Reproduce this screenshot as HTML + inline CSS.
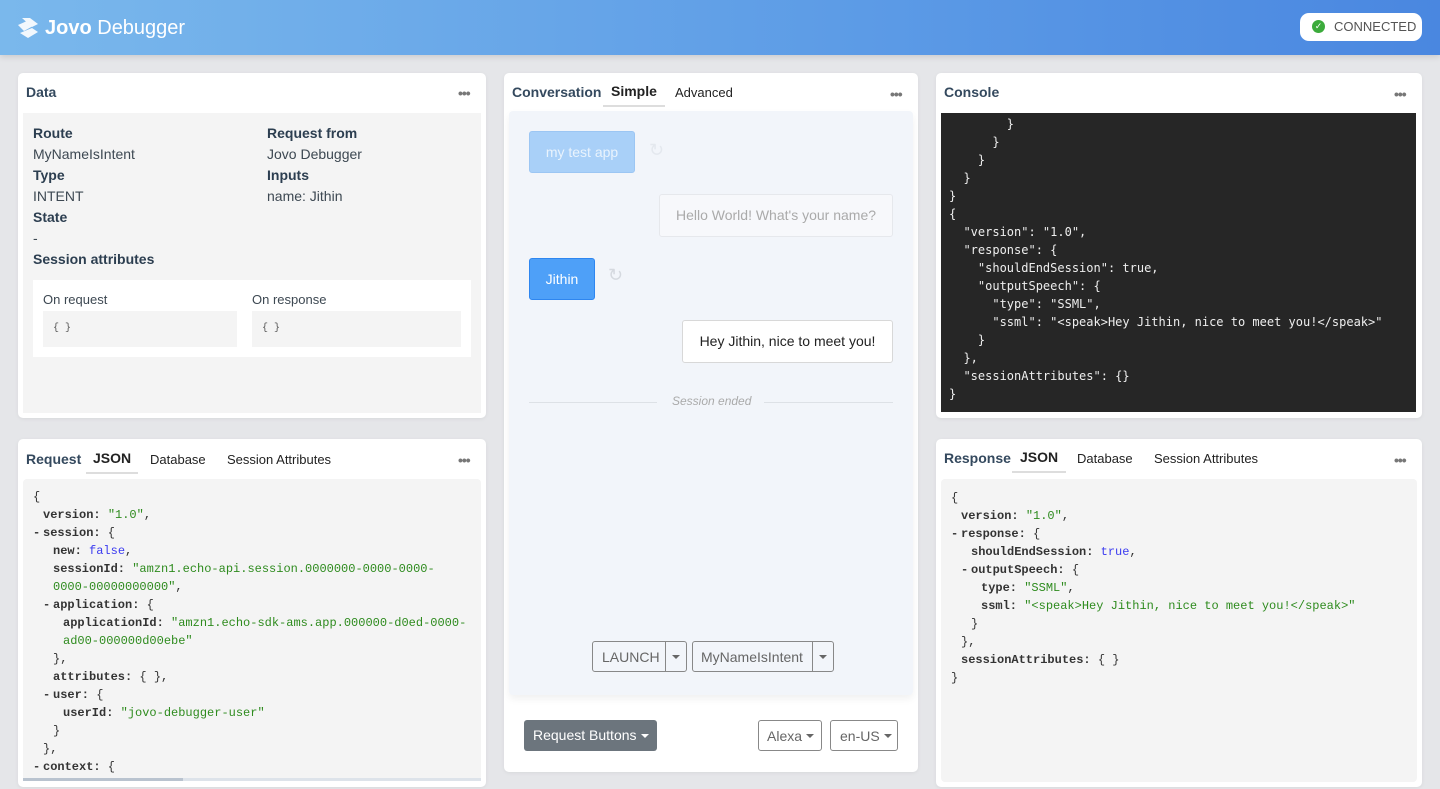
<!DOCTYPE html>
<html><head><meta charset="utf-8"><style>
*{box-sizing:border-box;margin:0;padding:0}
body{width:1440px;height:789px;overflow:hidden;background:#e5e6e9;font-family:"Liberation Sans",sans-serif;color:#2c3e50;position:relative}
.abs{position:absolute}
.hdr{left:0;top:0;width:1440px;height:55px;background:linear-gradient(90deg,#7ab8ec,#5c9be6 60%,#4a87e0);box-shadow:0 2px 6px rgba(0,0,0,.12)}
.panel{position:absolute;background:#fff;border-radius:5px;box-shadow:0 1px 4px rgba(0,0,0,.06)}
.t{position:absolute;font-size:14px;font-weight:bold;color:#34495e}
.tab{position:absolute;font-size:13px;color:#222}
.tab.act{font-weight:bold;font-size:14px;border-bottom:2px solid #ddd;padding-bottom:6px}
.dots{position:absolute;font-size:14px;color:#777;letter-spacing:-1px;font-weight:bold}
.code{position:absolute;font-family:"Liberation Mono",monospace;font-size:12px;line-height:18px;color:#333}
.code div{white-space:pre;position:relative}
.code i{font-style:normal;position:absolute;margin-left:-10px;font-weight:bold}
.k{font-weight:bold;color:#333}.s{color:#2e8b1e}.b{color:#3b3bf0}
.l1{padding-left:10px}.l2{padding-left:20px}.l3{padding-left:30px}
.lbl{font-size:14px;font-weight:bold;color:#2c3e50;position:absolute}
.val{font-size:14px;color:#3d4852;position:absolute}
.con{position:absolute;font-family:"DejaVu Sans Mono",monospace;font-size:12px;line-height:18px;color:#eee;white-space:pre}
.btn{position:absolute;border:1px solid #888;border-radius:3px;font-size:14px;color:#666;display:flex;align-items:center}
.car{display:inline-block;width:0;height:0;border-left:4px solid transparent;border-right:4px solid transparent;border-top:4px solid currentColor;margin-left:4px;vertical-align:middle}
</style></head><body>
<div class="abs hdr">
 <svg class="abs" style="left:16px;top:16px" width="26" height="24" viewBox="0 0 26 24"><path d="M6 2l8 0 8 6-6 3z M2 9l9-4 6 5-9 5z M4 17l12-5 6 4-10 6z" fill="#fff" opacity=".9"/></svg>
 <div class="abs" style="left:45px;top:17px;font-size:20px;color:#fff"><b>Jovo</b> Debugger</div>
 <div class="abs" style="left:1300px;top:13px;width:122px;height:28px;background:#fff;border-radius:9px;font-size:13px;color:#555;padding:6px 0 0 34px">CONNECTED</div>
 <div class="abs" style="left:1312px;top:20px;width:13px;height:13px;border-radius:50%;background:#3cab3c;color:#fff;font-size:9px;text-align:center;line-height:13px">✓</div>
</div>

<!-- Data -->
<div class="panel" style="left:18px;top:73px;width:468px;height:345px">
 <div class="t" style="left:8px;top:11px">Data</div><div class="dots" style="left:440px;top:12px">•••</div>
 <div class="abs" style="left:5px;top:40px;width:458px;height:300px;background:#f4f4f4"></div>
 <div class="lbl" style="left:15px;top:52px">Route</div><div class="val" style="left:15px;top:73px">MyNameIsIntent</div>
 <div class="lbl" style="left:15px;top:94px">Type</div><div class="val" style="left:15px;top:115px">INTENT</div>
 <div class="lbl" style="left:15px;top:136px">State</div><div class="val" style="left:15px;top:157px">-</div>
 <div class="lbl" style="left:15px;top:178px">Session attributes</div>
 <div class="lbl" style="left:249px;top:52px">Request from</div><div class="val" style="left:249px;top:73px">Jovo Debugger</div>
 <div class="lbl" style="left:249px;top:94px">Inputs</div><div class="val" style="left:249px;top:115px">name: Jithin</div>
 <div class="abs" style="left:15px;top:207px;width:438px;height:77px;background:#fff"></div>
 <div class="val" style="left:25px;top:219px;font-size:13px">On request</div>
 <div class="val" style="left:234px;top:219px;font-size:13px">On response</div>
 <div class="abs" style="left:25px;top:238px;width:194px;height:36px;background:#f4f4f4;font-family:'Liberation Mono',monospace;font-size:10px;padding:12px 10px;color:#555">{ }</div>
 <div class="abs" style="left:234px;top:238px;width:209px;height:36px;background:#f4f4f4;font-family:'Liberation Mono',monospace;font-size:10px;padding:12px 10px;color:#555">{ }</div>
</div>

<!-- Request -->
<div class="panel" style="left:18px;top:439px;width:468px;height:348px">
 <div class="t" style="left:8px;top:12px">Request</div>
 <div class="tab act" style="left:68px;top:11px;padding-left:7px;padding-right:7px">JSON</div>
 <div class="tab" style="left:132px;top:13px">Database</div>
 <div class="tab" style="left:209px;top:13px">Session Attributes</div>
 <div class="dots" style="left:440px;top:13px">•••</div>
 <div class="abs" style="left:5px;top:40px;width:458px;height:302px;background:#f4f4f4;border-radius:4px"></div>
 <div class="abs" style="left:5px;top:339px;width:458px;height:3px;background:#dde3ea"></div>
 <div class="abs" style="left:5px;top:339px;width:160px;height:3px;background:#b9c3cf"></div>
 <div class="code" style="left:15px;top:49px">
<div>{</div>
<div class="l1"><span class="k">version:</span> <span class="s">"1.0"</span>,</div>
<div class="l1"><i>-</i><span class="k">session:</span> {</div>
<div class="l2"><span class="k">new:</span> <span class="b">false</span>,</div>
<div class="l2"><span class="k">sessionId:</span> <span class="s">"amzn1.echo-api.session.0000000-0000-0000-</span></div>
<div class="l2"><span class="s">0000-00000000000"</span>,</div>
<div class="l2"><i>-</i><span class="k">application:</span> {</div>
<div class="l3"><span class="k">applicationId:</span> <span class="s">"amzn1.echo-sdk-ams.app.000000-d0ed-0000-</span></div>
<div class="l3"><span class="s">ad00-000000d00ebe"</span></div>
<div class="l2">},</div>
<div class="l2"><span class="k">attributes:</span> { },</div>
<div class="l2"><i>-</i><span class="k">user:</span> {</div>
<div class="l3"><span class="k">userId:</span> <span class="s">"jovo-debugger-user"</span></div>
<div class="l2">}</div>
<div class="l1">},</div>
<div class="l1"><i>-</i><span class="k">context:</span> {</div>
 </div>
</div>

<!-- Conversation -->
<div class="panel" style="left:504px;top:73px;width:414px;height:699px">
 <div class="t" style="left:8px;top:11px">Conversation</div>
 <div class="tab act" style="left:99px;top:10px;padding-left:8px;padding-right:8px">Simple</div>
 <div class="tab" style="left:171px;top:12px">Advanced</div>
 <div class="dots" style="left:386px;top:13px">•••</div>
 <div class="abs" style="left:5px;top:38px;width:404px;height:584px;background:#f2f5fa;border-radius:4px;box-shadow:0 4px 8px rgba(0,0,0,.06)"></div>
 <div class="abs" style="left:25px;top:58px;width:106px;height:42px;background:#a9d0f8;border:1px solid #9cc6f3;border-radius:3px;color:#e9f3fd;font-size:14px;text-align:center;line-height:40px">my test app</div>
 <div class="abs" style="left:145px;top:67px;color:#e4e8ee;font-size:18px">↻</div>
 <div class="abs" style="left:155px;top:121px;width:234px;height:43px;background:#f7f8fb;border:1px solid #e6e8ec;border-radius:3px;color:#aaa;font-size:14px;text-align:center;line-height:41px">Hello World! What's your name?</div>
 <div class="abs" style="left:25px;top:185px;width:66px;height:42px;background:#4ea0f8;border:1px solid #2e86f0;border-radius:3px;color:#fff;font-size:14px;text-align:center;line-height:40px">Jithin</div>
 <div class="abs" style="left:104px;top:192px;color:#d5d9df;font-size:18px">↻</div>
 <div class="abs" style="left:178px;top:247px;width:211px;height:43px;background:#fff;border:1px solid #d8d8d8;border-radius:3px;color:#222;font-size:14px;text-align:center;line-height:41px">Hey Jithin, nice to meet you!</div>
 <div class="abs" style="left:25px;top:329px;width:128px;height:1px;background:#dde1e6"></div>
 <div class="abs" style="left:260px;top:329px;width:129px;height:1px;background:#dde1e6"></div>
 <div class="abs" style="left:168px;top:321px;color:#aaa;font-size:12px;font-style:italic">Session ended</div>
 <div class="btn" style="left:88px;top:568px;width:95px;height:31px"><span style="padding-left:9px;width:73px">LAUNCH</span><span style="border-left:1px solid #888;height:100%;width:21px;display:flex;align-items:center;justify-content:center;color:#666"><span class="car" style="margin:0"></span></span></div>
 <div class="btn" style="left:188px;top:568px;width:142px;height:31px"><span style="padding-left:8px;width:120px">MyNameIsIntent</span><span style="border-left:1px solid #888;height:100%;width:21px;display:flex;align-items:center;justify-content:center;color:#666"><span class="car" style="margin:0"></span></span></div>
 <div class="abs" style="left:20px;top:647px;width:133px;height:31px;background:#6c757d;border-radius:3px;color:#fff;font-size:14px;padding:7px 0 0 9px">Request Buttons<span class="car"></span></div>
 <div class="btn" style="left:254px;top:647px;width:64px;height:31px;padding-left:8px">Alexa<span class="car"></span></div>
 <div class="btn" style="left:326px;top:647px;width:68px;height:31px;padding-left:9px">en-US<span class="car"></span></div>
</div>

<!-- Console -->
<div class="panel" style="left:936px;top:73px;width:486px;height:345px">
 <div class="t" style="left:8px;top:11px">Console</div><div class="dots" style="left:458px;top:13px">•••</div>
 <div class="abs" style="left:5px;top:40px;width:475px;height:299px;background:#262626"></div>
 <div class="con" style="left:13px;top:42px">        }
      }
    }
  }
}
{
  "version": "1.0",
  "response": {
    "shouldEndSession": true,
    "outputSpeech": {
      "type": "SSML",
      "ssml": "&lt;speak&gt;Hey Jithin, nice to meet you!&lt;/speak&gt;"
    }
  },
  "sessionAttributes": {}
}</div>
</div>

<!-- Response -->
<div class="panel" style="left:936px;top:439px;width:486px;height:348px">
 <div class="t" style="left:8px;top:11px">Response</div>
 <div class="tab act" style="left:76px;top:10px;padding-left:8px;padding-right:8px">JSON</div>
 <div class="tab" style="left:141px;top:12px">Database</div>
 <div class="tab" style="left:218px;top:12px">Session Attributes</div>
 <div class="dots" style="left:458px;top:13px">•••</div>
 <div class="abs" style="left:5px;top:40px;width:476px;height:303px;background:#f4f4f4;border-radius:4px"></div>
 <div class="code" style="left:15px;top:50px">
<div>{</div>
<div class="l1"><span class="k">version:</span> <span class="s">"1.0"</span>,</div>
<div class="l1"><i>-</i><span class="k">response:</span> {</div>
<div class="l2"><span class="k">shouldEndSession:</span> <span class="b">true</span>,</div>
<div class="l2"><i>-</i><span class="k">outputSpeech:</span> {</div>
<div class="l3"><span class="k">type:</span> <span class="s">"SSML"</span>,</div>
<div class="l3"><span class="k">ssml:</span> <span class="s">"&lt;speak&gt;Hey Jithin, nice to meet you!&lt;/speak&gt;"</span></div>
<div class="l2">}</div>
<div class="l1">},</div>
<div class="l1"><span class="k">sessionAttributes:</span> { }</div>
<div>}</div>
 </div>
</div>
</body></html>
